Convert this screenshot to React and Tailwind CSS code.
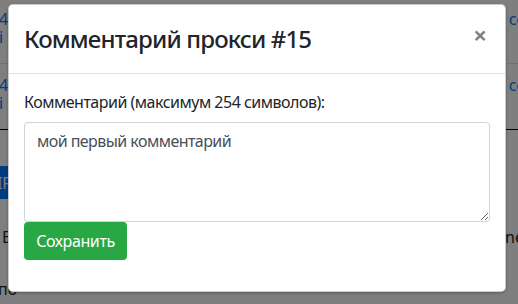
import { useState } from 'react'

const font = { fontFamily: '"Noto Sans", "Open Sans", Arial, sans-serif' }

function Backdrop() {
  return (
    <div className="w-[518px] h-[304px] bg-white overflow-hidden text-[16px] text-[#212529]" style={font}>
      <div className="flex justify-between items-start h-[64px] border-b border-[#dee2e6] pt-[10px] leading-[18px] text-[#007bff]">
        <div className="-ml-[1px]">
          <div>4 |</div>
          <div>i</div>
        </div>
        <div className="mr-[-6px]">cc</div>
      </div>
      <div className="flex justify-between items-start h-[66px] border-b border-black pt-[12px] leading-[18px] text-[#007bff]">
        <div className="-ml-[1px]">
          <div>4 |</div>
          <div>i</div>
        </div>
        <div className="mr-[-6px]">cc</div>
      </div>
      <div className="mt-[36px] h-[33px] w-[40px] -ml-[18px] bg-[#007bff] text-white flex items-center justify-end pr-[10px]">
        IP
      </div>
      <div className="flex justify-between mt-[26px]">
        <div className="ml-[2px]">Е</div>
        <div className="mr-[-6px]">ne</div>
      </div>
      <div className="mt-[28px] -ml-[2px]">по</div>
    </div>
  )
}

export default function App() {
  const [text, setText] = useState('мой первый комментарий')

  return (
    <div className="relative w-[518px] h-[304px] overflow-hidden" style={font}>
      <Backdrop />
      <div className="absolute inset-0 bg-black/50" />
      <div className="absolute inset-0 pl-[8px] pt-[4px]">
        <div className="w-[498px] bg-white rounded-[5px] border border-black/20 shadow-[0_1px_3px_rgba(0,0,0,0.3)] text-[#212529]">
          <div className="flex items-start justify-between p-[16px] border-b border-[#dee2e6]">
            <h4 className="text-[24px] leading-[36px] font-medium tracking-[-0.85px] -ml-[1px]">Комментарий прокси #15</h4>
            <button className="text-[24px] leading-[36px] font-bold text-black/50 mr-[2px] -mt-[4px]">×</button>
          </div>
          <div className="px-[15px] pt-[16px] pb-[17px]">
            <label className="block text-[16px] leading-[24px] mb-[8px] tracking-[-0.5px]">
              Комментарий (максимум 254 символов):
            </label>
            <textarea
              value={text}
              onChange={(e) => setText(e.target.value)}
              className="block w-[466px] h-[100px] px-[12px] py-[6px] text-[16px] leading-[24px] text-[#495057] border border-[#ced4da] rounded-[4px] outline-none tracking-[-0.55px]"
              style={font}
            />
            <button className="mb-[14px] h-[38px] w-[103px] bg-[#28a745] text-white text-[16px] leading-[24px] rounded-[4px] tracking-[-0.4px]">
              Сохранить
            </button>
          </div>
        </div>
      </div>
    </div>
  )
}
